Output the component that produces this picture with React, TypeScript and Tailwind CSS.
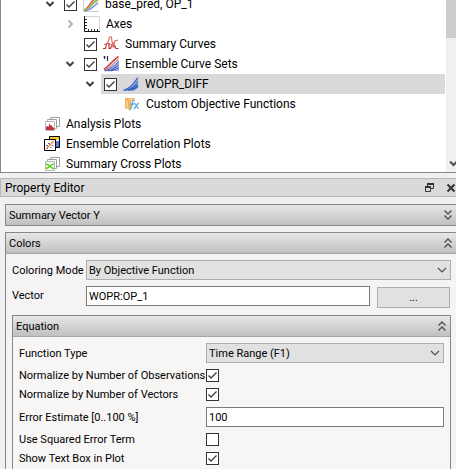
import React, { useId } from "react";

type IconProps = { children: React.ReactNode };

function Icon({ children }: IconProps) {
  return (
    <svg viewBox="0 0 16 16" className="size-4 shrink-0" fill="none" aria-hidden="true">
      {children}
    </svg>
  );
}

function PlotIcon() {
  return (
    <Icon>
      <path d="M.5 0v15.500H16" stroke="#cfcfcf" />
      <path d="M1 14C6 13 8 3 15 1" stroke="#e0574f" strokeWidth="1.500" />
      <path d="M1 15C8 13 8 6 15 4" stroke="#8cc152" strokeWidth="2" />
      <path d="M2 15C9 14 11 9 15 7" stroke="#7d8cf0" strokeWidth="1.500" />
    </Icon>
  );
}

function AxesIcon() {
  return (
    <Icon>
      <path d="M.5 .5h15v15" stroke="#d6d6d6" />
      <path d="M.5 0v15.500H16" stroke="#111" />
      <path
        d="M1 3.500h2M1 6.500h2M1 9.500h2M1 12.500h2M4.500 13v2M7.500 13v2M10.500 13v2M13.500 13v2"
        stroke="#333"
      />
    </Icon>
  );
}

function CurvesIcon() {
  return (
    <Icon>
      <path d="M0 12.500h2.500l1-5h2.500v5h1.500l1.500-3h2l2 3h2.500" stroke="#b8352b" strokeWidth="1.200" />
      <path d="M1 8.500l3-.500 1.500-3 1-4h2l.500 5 2 2 1-3 3-1M5 8l4 1 2 3M9 7l4 4" stroke="#dc6a62" strokeWidth="1.100" />
    </Icon>
  );
}

function EnsembleSetIcon() {
  return (
    <Icon>
      <path d="M1.500 0v3M4.500 0v5M.500 1h2" stroke="#2b2550" strokeWidth="1.200" />
      <path d="M1 15C8 14 12 9 16 4v11z" fill="#9fb0ee" />
      <path d="M1 13.500C6 10 10 4 15.500 .500" stroke="#c8403f" strokeWidth="1.600" />
      <path d="M1 15C7 12 11 7 15.500 3" stroke="#c98a9c" strokeWidth="1.300" />
      <path d="M2 15C8 13 12 9 15.500 6M5 15c5-1 8-4 10.500-6M8 15c3-1 5-2 7.500-3" stroke="#3b50b0" />
    </Icon>
  );
}

function CurveSetIcon() {
  return (
    <Icon>
      <path d="M0 14.500C7 13 11 7 15 1.500v10l-3 3z" fill="#9dbcee" />
      <path
        d="M0 14.500C7 13 11 7 15 1.500M2 14.500c6-1 10-5 13-9M5 14.500c4-1 7-3 10-6M8 14.500c3-1 5-2 7-4"
        stroke="#3a64bd"
        strokeWidth="1.200"
      />
    </Icon>
  );
}

function FunctionIcon() {
  return (
    <Icon>
      <path d="M1 2h9.500v3H7v9H5l-1-1.500H1z" fill="#f4b459" />
      <path d="M3 5v6M5 3.500h4" stroke="#fde6bd" />
      <path
        d="M10.500 4.500C8 3.500 8.500 8 7.500 11s-1 3-2 3M6 8h4M10.500 7l4 6M14.500 7l-4.500 6"
        stroke="#5fa8d8"
        strokeWidth="1.300"
      />
    </Icon>
  );
}

function StackedSheets({ children }: IconProps) {
  return (
    <Icon>
      <path d="M6.500 1.500h9v9h-9z" fill="#fff" stroke="#9aa39f" />
      <path d="M3.500 3.500h9v9h-9z" fill="#fff" stroke="#9aa39f" />
      <path d="M1.500 5.500h9v9h-9z" fill="#fff" stroke="#b5bab7" />
      {children}
    </Icon>
  );
}

function AnalysisIcon() {
  return (
    <StackedSheets>
      <path d="M2 14v-3l1.500-1 1 1L5.500 7l1 3 1-1 1 2 1.500 1v2z" fill="#c22f38" />
    </StackedSheets>
  );
}

function CorrelationIcon() {
  return (
    <Icon>
      <path d="M5.500 .500h10v11h-10z" fill="#fff" stroke="#000" />
      <path d="M6 1h9v3H6z" fill="#f7c534" />
      <path d="M11 5h4v6h-4z" fill="#5a78d6" />
      <path d="M.500 3.500h11v11H.500z" fill="#fff" stroke="#000" />
      <path d="M2 13l8-8" stroke="#f0a040" strokeWidth="1.300" />
      <path d="M2 9.500h2M4 7.500h2M7.500 9.500h2M6 11.500h1.500M3 12.500h1" stroke="#5a68d0" strokeWidth="1.200" />
      <path d="M3 10.500h2M7 6h2M5 8.500h2" stroke="#ea7d45" />
    </Icon>
  );
}

function CrossPlotIcon() {
  return (
    <StackedSheets>
      <path d="M2 8c3 0 4 4.500 8 4.500M2 12.500C5 12.500 6 8 10 8" stroke="#5fd01e" strokeWidth="1.700" />
    </StackedSheets>
  );
}

function Expander({ state }: { state?: "open" | "closed" }) {
  if (!state) return <span className="w-5 shrink-0" />;
  const open = state === "open";
  return (
    <button
      type="button"
      aria-label={open ? "Collapse" : "Expand"}
      className="flex h-5 w-5 shrink-0 items-center justify-center"
    >
      <svg viewBox="0 0 10 10" className="size-2.5" fill="none" aria-hidden="true">
        {open ? (
          <path d="M1.500 3 5 6.500 8.500 3" stroke="#404040" strokeWidth="2" />
        ) : (
          <path d="M3.500 1.500 7 5 3.500 8.500" stroke="#a3a3a3" strokeWidth="1.700" />
        )}
      </svg>
    </button>
  );
}

function CheckBox({ id, checked, label }: { id?: string; checked?: boolean; label?: string }) {
  return (
    <span className="relative block size-[13px] shrink-0">
      <input
        id={id}
        type="checkbox"
        defaultChecked={checked}
        aria-label={label}
        className="peer block size-[13px] appearance-none border border-[#333333] bg-white"
      />
      <svg
        viewBox="0 0 13 13"
        className="pointer-events-none absolute inset-0 hidden size-[13px] peer-checked:block"
        fill="none"
        aria-hidden="true"
      >
        <path d="M2.500 6.500 5 9l5.500-5.500" stroke="#404040" strokeWidth="1.400" />
      </svg>
    </span>
  );
}

type Node = {
  label: string;
  indent: string;
  expander?: "open" | "closed";
  checkable?: boolean;
  selected?: boolean;
  icon: React.ReactNode;
};

const nodes: Node[] = [
  { label: "base_pred, OP_1", indent: "pl-[39px]", expander: "open", checkable: true, icon: <PlotIcon /> },
  { label: "Axes", indent: "pl-[59px]", expander: "closed", icon: <AxesIcon /> },
  { label: "Summary Curves", indent: "pl-[59px]", checkable: true, icon: <CurvesIcon /> },
  { label: "Ensemble Curve Sets", indent: "pl-[59px]", expander: "open", checkable: true, icon: <EnsembleSetIcon /> },
  { label: "WOPR_DIFF", indent: "pl-[79px]", expander: "open", checkable: true, selected: true, icon: <CurveSetIcon /> },
  { label: "Custom Objective Functions", indent: "pl-[99px]", icon: <FunctionIcon /> },
  { label: "Analysis Plots", indent: "pl-[19px]", icon: <AnalysisIcon /> },
  { label: "Ensemble Correlation Plots", indent: "pl-[19px]", icon: <CorrelationIcon /> },
  { label: "Summary Cross Plots", indent: "pl-[19px]", icon: <CrossPlotIcon /> },
];

function TreeRow({ node }: { node: Node }) {
  return (
    <li className={`flex h-5 items-center ${node.indent}`}>
      <Expander state={node.expander} />
      <div
        className={`ml-px flex h-5 grow items-center gap-1.5 pl-[3px] ${node.selected ? "bg-[#d9d9d9]" : ""}`}
      >
        {node.checkable && <CheckBox checked label={node.label} />}
        {node.icon}
        <span className="whitespace-nowrap">{node.label}</span>
      </div>
    </li>
  );
}

function ProjectTree() {
  return (
    <section className="flex h-[173px] shrink-0 overflow-hidden border-b border-l border-[#828790] bg-white text-[12px] leading-5">
      <ul className="-mt-1.5 mr-px grow">
        {nodes.map((node) => (
          <TreeRow key={node.label} node={node} />
        ))}
      </ul>
      <div className="flex w-2.5 shrink-0 flex-col justify-between overflow-hidden bg-[#f0f0f0]">
        <div className="h-[38px] bg-[#cdcdcd]" />
        <svg viewBox="0 0 10 18" className="h-[18px] w-2.5" fill="none" aria-hidden="true">
          <path d="M4 7.500 7.500 11 11 7.500" stroke="#505050" strokeWidth="2" />
        </svg>
      </div>
    </section>
  );
}

function DoubleChevron({ up }: { up?: boolean }) {
  return (
    <svg viewBox="0 0 8 12" className="h-3 w-2" fill="none" aria-hidden="true">
      {up ? (
        <path d="M.500 5.500 4 2l3.500 3.500M.500 10.500 4 7l3.500 3.500" stroke="#505050" strokeWidth="1.400" />
      ) : (
        <path d="M.500 1.500 4 5l3.500-3.500M.500 6.500 4 10l3.500-3.500" stroke="#505050" strokeWidth="1.400" />
      )}
    </svg>
  );
}

function GroupHeader({ title, open, className }: { title: string; open?: boolean; className: string }) {
  return (
    <button
      type="button"
      aria-expanded={!!open}
      className={`flex w-full shrink-0 items-center justify-between bg-linear-to-b from-[#e7e7e7] to-[#c0c0c0] text-left ${className}`}
    >
      <span>{title}</span>
      <DoubleChevron up={open} />
    </button>
  );
}

function ComboBox({ id, value }: { id: string; value: string }) {
  return (
    <div className="relative grow">
      <select
        id={id}
        defaultValue={value}
        className="block h-5 w-full appearance-none border border-[#adadad] bg-[#e1e1e1] pl-0.5"
      >
        <option>{value}</option>
      </select>
      <svg
        viewBox="0 0 10 10"
        className="pointer-events-none absolute top-[5px] right-1 size-2.5"
        fill="none"
        aria-hidden="true"
      >
        <path d="M1 3l4 4 4-4" stroke="#505050" strokeWidth="1.200" />
      </svg>
    </div>
  );
}

function TextBox({ id, value }: { id: string; value: string }) {
  return (
    <input
      id={id}
      type="text"
      defaultValue={value}
      className="block h-5 w-full min-w-0 grow border border-[#7a7a7a] bg-white pl-0.5"
    />
  );
}

function EquationGroup() {
  const id = useId();
  return (
    <section className="mt-[7px] mr-[5px] flex grow flex-col border-x border-t border-[#828790] bg-[#f7f6f5]">
      <GroupHeader title="Equation" open className="h-[21px] border-b border-[#a5a5a5] pr-1 pl-[3px]" />
      <div className="grid grid-cols-[187px_1fr] items-center gap-y-1.5 px-1.5 pt-1.5 whitespace-nowrap">
        <label htmlFor={`${id}-type`}>Function Type</label>
        <ComboBox id={`${id}-type`} value="Time Range (F1)" />
        <label htmlFor={`${id}-obs`}>Normalize by Number of Observations</label>
        <CheckBox id={`${id}-obs`} checked />
        <label htmlFor={`${id}-vec`}>Normalize by Number of Vectors</label>
        <CheckBox id={`${id}-vec`} checked />
        <label htmlFor={`${id}-err`}>Error Estimate [0..100 %]</label>
        <TextBox id={`${id}-err`} value="100" />
        <label htmlFor={`${id}-sq`}>Use Squared Error Term</label>
        <CheckBox id={`${id}-sq`} />
        <label htmlFor={`${id}-box`}>Show Text Box in Plot</label>
        <CheckBox id={`${id}-box`} checked />
      </div>
    </section>
  );
}

function ColorsGroup() {
  const id = useId();
  return (
    <section className="mt-1.5 ml-[5px] flex grow flex-col border-t border-l border-[#828790] bg-[#f5f3f4]">
      <GroupHeader title="Colors" open className="h-[21px] border-b border-[#a5a5a5] pr-1 pl-[3px]" />
      <div className="flex grow flex-col pt-1.5 pl-1.5">
        <div className="mr-[5px] flex items-center">
          <label htmlFor={`${id}-mode`} className="w-[74px] shrink-0">
            Coloring Mode
          </label>
          <ComboBox id={`${id}-mode`} value="By Objective Function" />
        </div>
        <div className="mt-1.5 mr-1.5 flex items-start">
          <label htmlFor={`${id}-vector`} className="w-[74px] shrink-0 pt-[3px]">
            Vector
          </label>
          <TextBox id={`${id}-vector`} value="WOPR:OP_1" />
          <button
            type="button"
            className="mt-px ml-[7px] h-[21px] w-[73px] shrink-0 border border-[#adadad] bg-[#e1e1e1]"
          >
            ...
          </button>
        </div>
        <EquationGroup />
      </div>
    </section>
  );
}

function PropertyEditor() {
  return (
    <section className="flex grow flex-col text-[11px] leading-[13px]">
      <header className="mt-[5px] flex h-[19px] items-center justify-between border-y border-l border-[#b8b8b8] bg-[#dadada] pl-1">
        <h2 className="text-[12px] leading-4">Property Editor</h2>
        <div className="flex items-center gap-3">
          <button type="button" aria-label="Float">
            <svg viewBox="0 0 9 9" className="size-[9px]" fill="none" aria-hidden="true">
              <path d="M2.500 3V.500h6v5H6" stroke="#333" />
              <path d="M2 1h7M0 4h6" stroke="#333" strokeWidth="2" />
              <path d="M.500 3.500h5v5h-5z" stroke="#333" />
            </svg>
          </button>
          <button type="button" aria-label="Close">
            <svg viewBox="0 0 10 10" className="size-2.5" fill="none" aria-hidden="true">
              <path d="M1.500 1.500l7 7M8.500 1.500l-7 7" stroke="#333" strokeWidth="2" />
            </svg>
          </button>
        </div>
      </header>
      <section className="mt-[7px] ml-[5px] border-y border-l border-[#828790]">
        <GroupHeader title="Summary Vector Y" className="h-5 pr-1 pl-[3px]" />
      </section>
      <ColorsGroup />
    </section>
  );
}

export default function App() {
  return (
    <main className="flex min-h-screen flex-col overflow-hidden bg-[#f0f0f0] font-[Roboto,'Noto_Sans',sans-serif] text-black">
      <ProjectTree />
      <PropertyEditor />
    </main>
  );
}
